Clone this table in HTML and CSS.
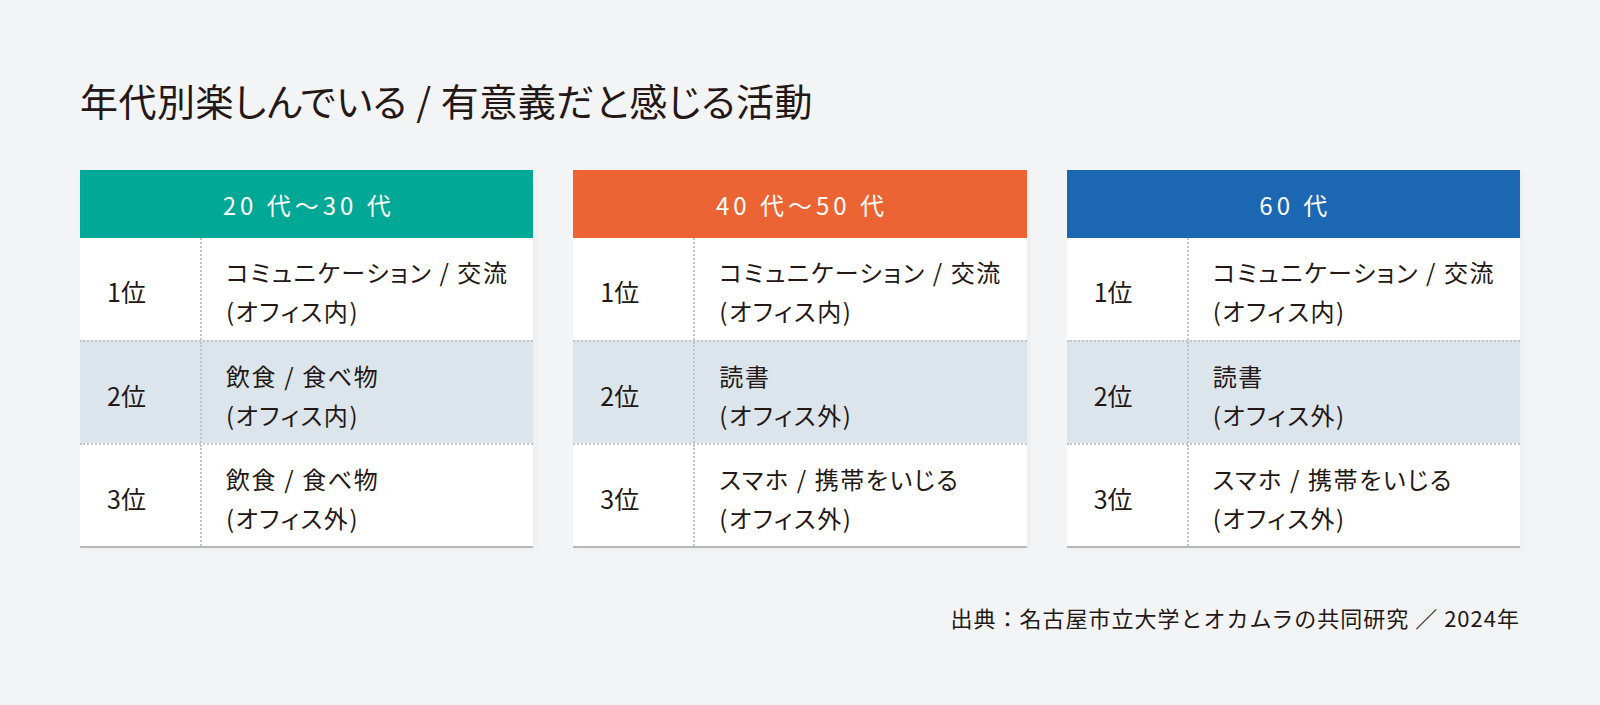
FILE: index.html
```html
<!DOCTYPE html>
<html lang="ja">
<head>
<meta charset="utf-8">
<title>年代別楽しんでいる / 有意義だと感じる活動</title>
<link rel="stylesheet" href="styles.css">
</head>
<body>
<main class="page">
  <h1 class="title">年代別楽しんでいる / 有意義だと感じる活動</h1>
  <div class="tables">
    <section class="table">
      <div class="head head-teal">20 代〜30 代</div>
      <div class="row">
        <div class="rank">1位</div>
        <div class="item"><span>コミュニケーション / 交流</span><span>(オフィス内)</span></div>
      </div>
      <div class="row row-alt">
        <div class="rank">2位</div>
        <div class="item"><span>飲食 / 食べ物</span><span>(オフィス内)</span></div>
      </div>
      <div class="row">
        <div class="rank">3位</div>
        <div class="item"><span>飲食 / 食べ物</span><span>(オフィス外)</span></div>
      </div>
    </section>
    <section class="table">
      <div class="head head-orange">40 代〜50 代</div>
      <div class="row">
        <div class="rank">1位</div>
        <div class="item"><span>コミュニケーション / 交流</span><span>(オフィス内)</span></div>
      </div>
      <div class="row row-alt">
        <div class="rank">2位</div>
        <div class="item"><span>読書</span><span>(オフィス外)</span></div>
      </div>
      <div class="row">
        <div class="rank">3位</div>
        <div class="item"><span>スマホ / 携帯をいじる</span><span>(オフィス外)</span></div>
      </div>
    </section>
    <section class="table">
      <div class="head head-blue">60 代</div>
      <div class="row">
        <div class="rank">1位</div>
        <div class="item"><span>コミュニケーション / 交流</span><span>(オフィス内)</span></div>
      </div>
      <div class="row row-alt">
        <div class="rank">2位</div>
        <div class="item"><span>読書</span><span>(オフィス外)</span></div>
      </div>
      <div class="row">
        <div class="rank">3位</div>
        <div class="item"><span>スマホ / 携帯をいじる</span><span>(オフィス外)</span></div>
      </div>
    </section>
  </div>
  <p class="source">出典：名古屋市立大学とオカムラの共同研究 ／ 2024年</p>
</main>
</body>
</html>
```

FILE: styles.css
```css
html, body {
  margin: 0;
  padding: 0;
}

body {
  background: #f3f4f6;
  color: #231815;
  font-family: "Noto Sans CJK JP", "Noto Sans", sans-serif;
  font-feature-settings: "palt";
}

.page {
  padding: 76px 80px 0;
}

.title {
  margin: 0;
  font-size: 38px;
  font-weight: 400;
  line-height: 48px;
  letter-spacing: 0.5px;
}

.tables {
  margin-top: 46px;
  display: grid;
  grid-template-columns: repeat(3, 1fr);
  column-gap: 40px;
}

.table {
  background: #ffffff;
  border-bottom: 2px solid #b7b8ba;
  box-shadow: 3px 2px 6px rgba(0, 0, 0, 0.03);
}

.head {
  height: 68px;
  display: flex;
  align-items: center;
  justify-content: center;
  color: #ffffff;
  font-size: 24px;
  letter-spacing: 4px;
  padding-left: 4px;
}

.head-teal { background: #00a895; }
.head-orange { background: #ec6433; }
.head-blue { background: #1b67b2; }

.row {
  display: grid;
  grid-template-columns: 120px 1fr;
  height: 102px;
  box-sizing: border-box;
}

.row + .row {
  border-top: 2px dotted #c2c4c6;
  height: 103px;
}

.row-alt {
  background: #dce5eb;
}

.rank {
  display: flex;
  align-items: center;
  padding-left: 27px;
  font-size: 25px;
  padding-top: 4px;
}

.item {
  border-left: 2px dotted #c2c4c6;
  display: flex;
  flex-direction: column;
  justify-content: center;
  padding-left: 24px;
  padding-top: 4px;
  font-size: 24px;
  line-height: 39px;
  letter-spacing: 1.6px;
}

.source {
  margin: 54px 0 0;
  text-align: right;
  font-size: 22px;
  line-height: 30px;
  letter-spacing: 1px;
  font-feature-settings: normal;
}
```
